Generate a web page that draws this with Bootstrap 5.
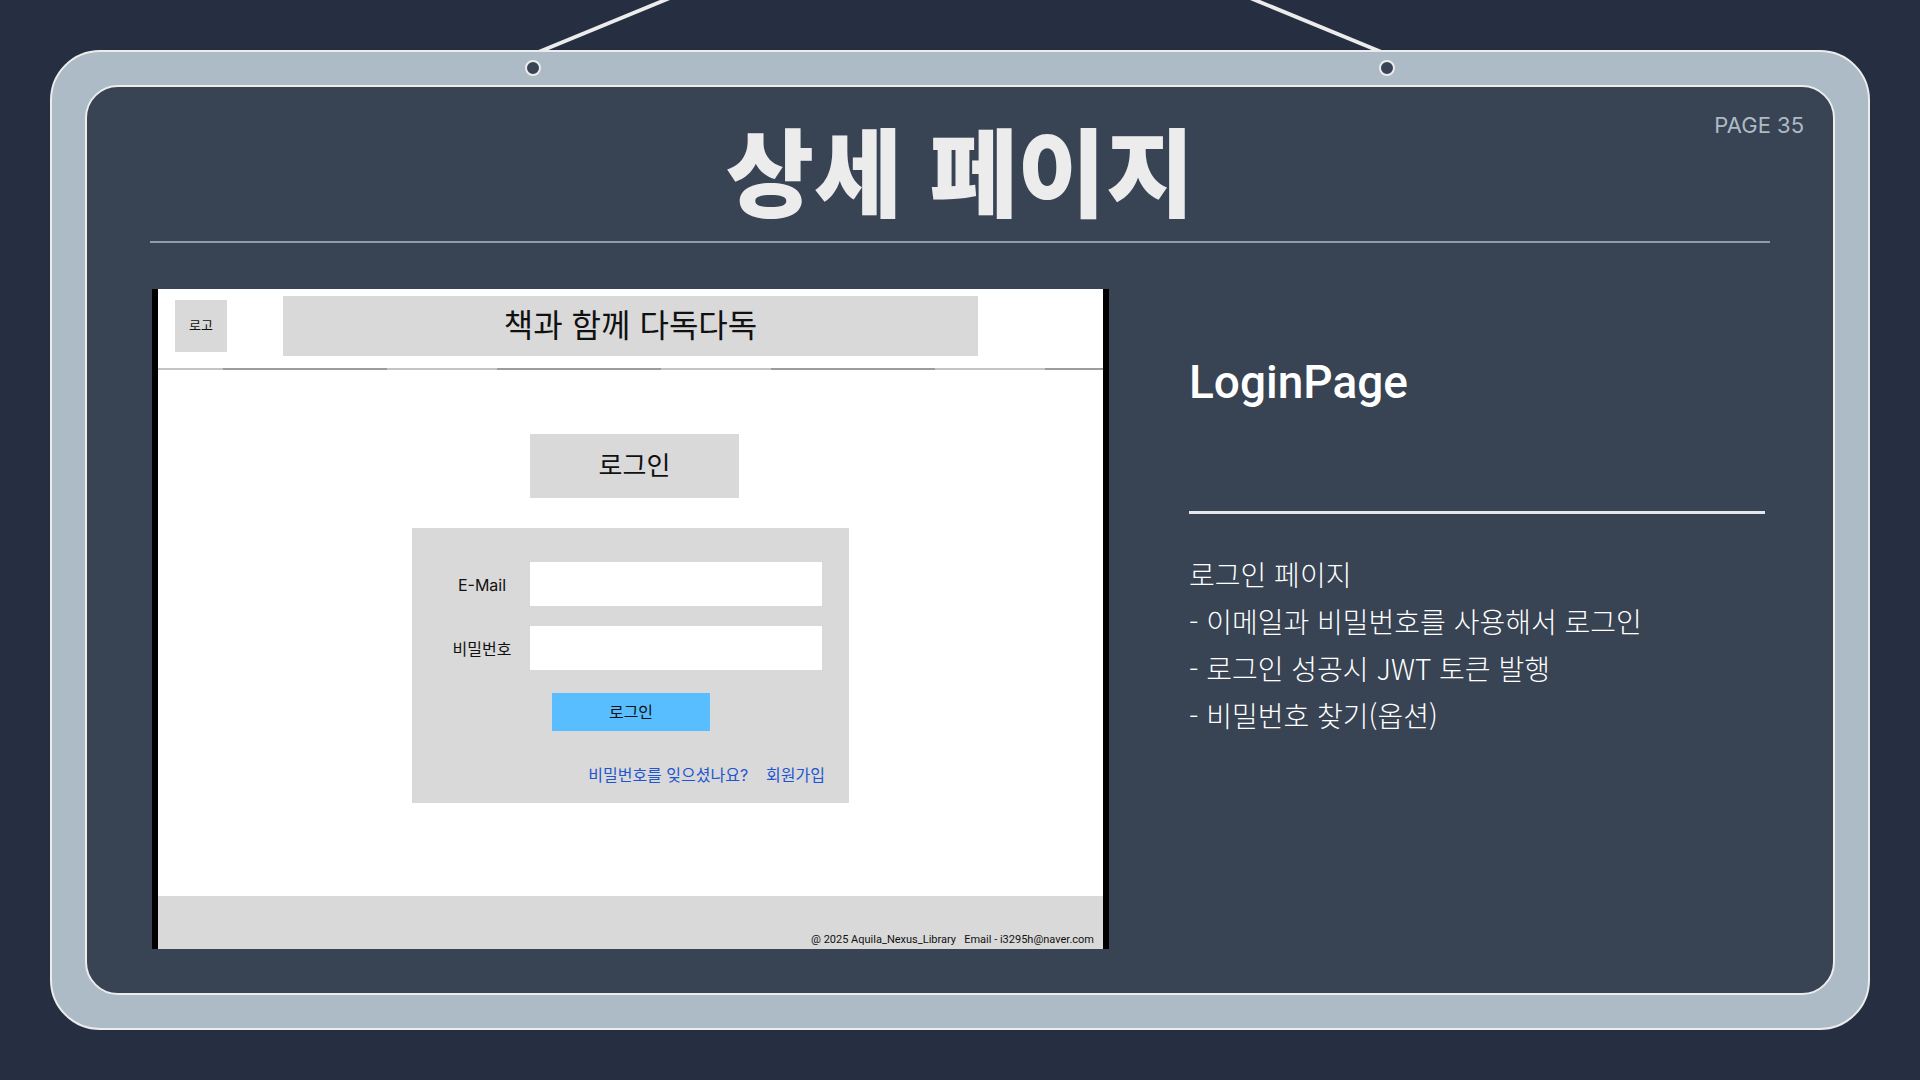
<!DOCTYPE html>
<html lang="ko">
<head>
<meta charset="utf-8">
<meta name="viewport" content="width=device-width, initial-scale=1">
<title>상세 페이지</title>
<link href="https://cdn.jsdelivr.net/npm/bootstrap@5.3.0/dist/css/bootstrap.min.css" rel="stylesheet">
<style>
  body { background: #262e41; font-family: Inter, "Noto Sans CJK KR", sans-serif; padding: 50px; }
  .rope { top: 0; left: 50%; width: 880px; height: 80px; margin-left: -440px; }
  .board-frame { background: #adbbc6; border: 2px solid #ececec; border-radius: 50px; padding: 33px; }
  .board { background: #384354; border: 2px solid #ececec; border-radius: 33px; min-height: 910px; }
  .board-head { padding: 22px 29px 0; height: 154px; }
  .board-title { font: 900 96px/118px "Noto Sans CJK KR", sans-serif; color: #ececec; }
  .page-no { font-size: 22px; line-height: 32px; color: #adbbc6; }
  .board-rule { height: 2px; margin: 0 63px; background: #8f9ca9; }
  .board-body { display: grid; grid-template-columns: 957fr 576fr; margin: 46px 68px 44px 65px; gap: 80px; }

  .mockup { min-width: 0; height: 660px; background: #fff; border: solid #000; border-width: 0 6px; color: #111; }
  .fill-gray { background: #d9d9d9; }
  .mock-head { height: 79px; padding: 7px 125px 0 17px; gap: 56px; }
  .mock-logo { width: 52px; height: 52px; font-size: 13px; }
  .mock-name { height: 60px; font-size: 32px; line-height: 60px; }
  .mock-line { height: 2px; background: repeating-linear-gradient(90deg, #9c9c9c 0 164px, #c4c4c4 164px 274px) -209px 0 / 2000px 2px; }
  .mock-main { width: 437px; margin-top: 64px; }
  .mock-heading { width: 209px; height: 64px; margin-left: 118px; font-size: 26px; line-height: 64px; }
  .login-box { margin-top: 30px; height: 275px; padding: 34px 27px 0 0; font-size: 16px; line-height: 24px; }
  .field-label { width: 118px; padding: 2px 0 0 22px; text-align: center; }
  .login-box .form-control { height: 44px; background: #fff; border: 0; border-radius: 0; }
  .login-btn { width: 158px; height: 38px; margin: 23px 0 0 140px; padding: 0; border: 0; border-radius: 0; background: #58beff; color: #111; font-size: 16px; }
  .login-btn:hover { background: #3fb0f7; }
  .login-links { margin: 32px -3px 0 0; gap: 18px; }
  .login-links a { color: #1f55d0; text-decoration: none; }
  .mock-foot { height: 53px; padding: 0 9px 1px; font: 11px/16px Roboto, sans-serif; white-space: pre; }

  .notes { min-width: 0; padding-top: 65px; color: #fff; }
  .notes-title { font: 500 46px/56px Roboto, sans-serif; margin-bottom: 101px; }
  .notes-rule { height: 3px; background: #e4e6e9; margin-bottom: 37px; }
  .notes-text { font: 300 28px/47px "Noto Sans CJK KR", sans-serif; }
</style>
</head>
<body class="position-relative">
<svg class="rope position-absolute" viewBox="0 0 880 80" aria-hidden="true">
  <g fill="#ececec">
    <path d="M16 51 L26 51 L150 0 L140 0 Z"/>
    <path d="M864 51 L854 51 L730 0 L740 0 Z"/>
  </g>
  <g fill="#384354" stroke="#ececec" stroke-width="2">
    <circle cx="13" cy="68" r="7"/>
    <circle cx="867" cy="68" r="7"/>
  </g>
</svg>

<div class="board-frame">
  <main class="board">
    <header class="board-head row g-0">
      <div class="col"></div>
      <h1 class="board-title col-auto mb-0">상세 페이지</h1>
      <div class="page-no col text-end">PAGE 35</div>
    </header>
    <div class="board-rule"></div>

    <div class="board-body">
      <section class="mockup d-flex flex-column">
        <div class="mock-head d-flex">
          <div class="mock-logo fill-gray d-flex align-items-center justify-content-center flex-shrink-0 mt-1">로고</div>
          <div class="mock-name fill-gray flex-grow-1 text-center">책과 함께 다독다독</div>
        </div>
        <div class="mock-line"></div>
        <div class="mock-main mx-auto">
          <div class="mock-heading fill-gray text-center">로그인</div>
          <form class="login-box fill-gray">
            <div class="d-flex align-items-center">
              <label class="field-label flex-shrink-0" for="email">E-Mail</label>
              <input class="form-control" type="email" id="email">
            </div>
            <div class="d-flex align-items-center mt-3 pt-1">
              <label class="field-label flex-shrink-0" for="password">비밀번호</label>
              <input class="form-control" type="password" id="password">
            </div>
            <button class="login-btn btn d-block" type="button">로그인</button>
            <div class="login-links d-flex justify-content-end">
              <a href="#">비밀번호를 잊으셨나요?</a>
              <a href="#">회원가입</a>
            </div>
          </form>
        </div>
        <footer class="mock-foot fill-gray d-flex align-items-end justify-content-end mt-auto">@ 2025 Aquila_Nexus_Library   Email - i3295h@naver.com</footer>
      </section>

      <section class="notes">
        <h2 class="notes-title">LoginPage</h2>
        <div class="notes-rule"></div>
        <div class="notes-text">
          <div>로그인 페이지</div>
          <div>- 이메일과 비밀번호를 사용해서 로그인</div>
          <div>- 로그인 성공시 JWT 토큰 발행</div>
          <div>- 비밀번호 찾기(옵션)</div>
        </div>
      </section>
    </div>
  </main>
</div>
<script src="https://cdn.jsdelivr.net/npm/bootstrap@5.3.0/dist/js/bootstrap.bundle.min.js"></script>
</body>
</html>
